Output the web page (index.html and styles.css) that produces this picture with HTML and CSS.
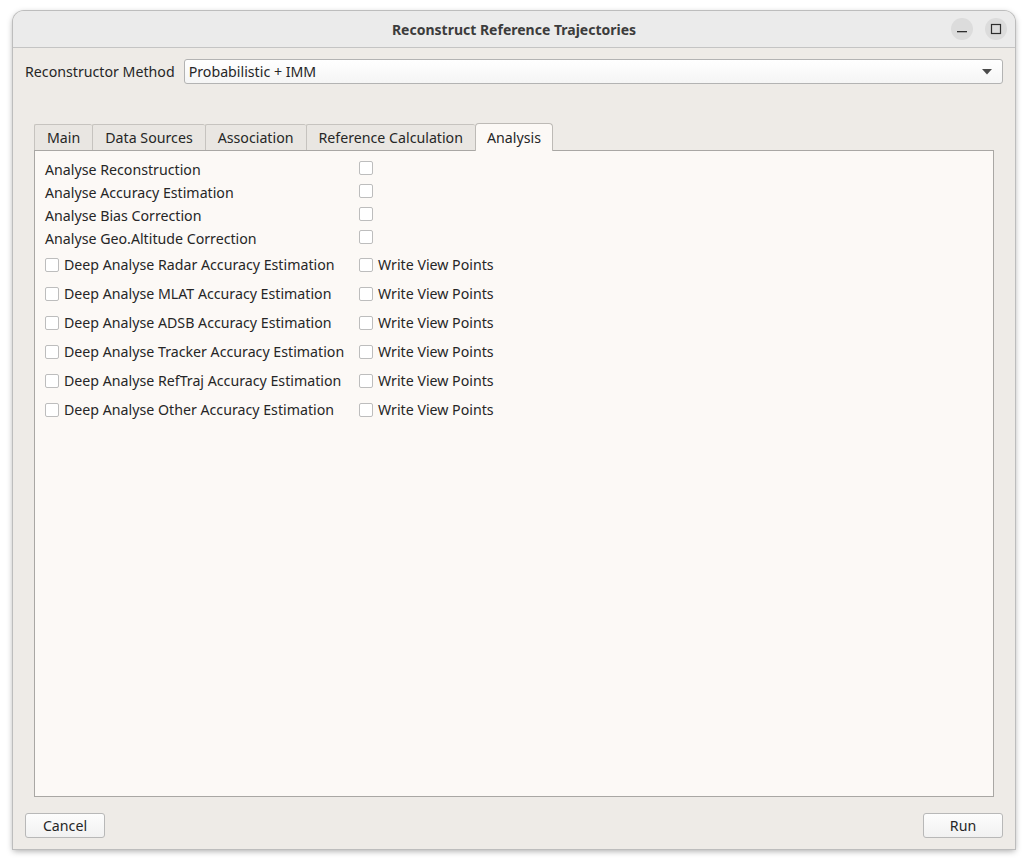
FILE: index.html
```html
<!DOCTYPE html>
<html>
<head>
<meta charset="utf-8">
<link rel="stylesheet" href="styles.css">
</head>
<body>
<div class="window">
  <div class="titlebar">
    <div class="title">Reconstruct Reference Trajectories</div>
    <div class="wbtns">
      <span class="wbtn"><svg width="12" height="12" viewBox="0 0 12 12"><rect x="1" y="8" width="10" height="1.3" fill="#2e2e2e"/></svg></span>
      <span class="wbtn"><svg width="12" height="12" viewBox="0 0 12 12"><rect x="1.5" y="1.5" width="9" height="9" fill="none" stroke="#2e2e2e" stroke-width="1.2"/></svg></span>
    </div>
  </div>
  <div class="content">
    <div class="method-row">
      <span class="label">Reconstructor Method</span>
      <div class="combo"><span>Probabilistic + IMM</span><svg width="10" height="6" viewBox="0 0 10 6"><path d="M0 0 L10 0 L5 5.5 Z" fill="#4a4a4a"/></svg></div>
    </div>
    <div class="tabs">
      <div class="tab">Main</div>
      <div class="tab">Data Sources</div>
      <div class="tab">Association</div>
      <div class="tab">Reference Calculation</div>
      <div class="tab active">Analysis</div>
    </div>
    <div class="panel">
      <div class="simple">
        <div class="srow"><span class="txt">Analyse Reconstruction</span><span class="cb"></span></div>
        <div class="srow"><span class="txt">Analyse Accuracy Estimation</span><span class="cb"></span></div>
        <div class="srow"><span class="txt">Analyse Bias Correction</span><span class="cb"></span></div>
        <div class="srow"><span class="txt">Analyse Geo.Altitude Correction</span><span class="cb"></span></div>
      </div>
      <div class="deep">
        <div class="drow"><label class="chk"><span class="cb"></span>Deep Analyse Radar Accuracy Estimation</label><label class="chk"><span class="cb"></span>Write View Points</label></div>
        <div class="drow"><label class="chk"><span class="cb"></span>Deep Analyse MLAT Accuracy Estimation</label><label class="chk"><span class="cb"></span>Write View Points</label></div>
        <div class="drow"><label class="chk"><span class="cb"></span>Deep Analyse ADSB Accuracy Estimation</label><label class="chk"><span class="cb"></span>Write View Points</label></div>
        <div class="drow"><label class="chk"><span class="cb"></span>Deep Analyse Tracker Accuracy Estimation</label><label class="chk"><span class="cb"></span>Write View Points</label></div>
        <div class="drow"><label class="chk"><span class="cb"></span>Deep Analyse RefTraj Accuracy Estimation</label><label class="chk"><span class="cb"></span>Write View Points</label></div>
        <div class="drow"><label class="chk"><span class="cb"></span>Deep Analyse Other Accuracy Estimation</label><label class="chk"><span class="cb"></span>Write View Points</label></div>
      </div>
    </div>
    <div class="buttons">
      <button class="btn">Cancel</button>
      <button class="btn">Run</button>
    </div>
  </div>
</div>
</body>
</html>
```
FILE: styles.css
```css
* { box-sizing: border-box; }
html, body { margin: 0; padding: 0; background: #ffffff; }
body {
  min-height: 866px;
  font-family: "Noto Sans", "Open Sans", sans-serif;
  font-size: 14.2px;
  color: #262626;
}
.window {
  margin: 11px 0 0 13px;
  width: 1002px;
  height: 838px;
  border-radius: 11px 11px 0 0;
  background: #eeebe7;
  box-shadow: 0 0 0 1px #bdbdbd, 0 2px 6px rgba(0,0,0,0.35);
  overflow: hidden;
  display: flex;
  flex-direction: column;
}
.titlebar {
  height: 37px;
  flex: none;
  background: #ebebeb;
  border-bottom: 1px solid #c4c4c4;
  display: flex;
  align-items: center;
  justify-content: center;
  position: relative;
}
.title {
  font-weight: bold;
  font-size: 14px;
  color: #3c3c3c;
}
.wbtns {
  position: absolute;
  right: 8px;
  top: 7px;
  display: flex;
  gap: 12px;
}
.wbtn {
  width: 22px;
  height: 22px;
  border-radius: 50%;
  background: #dcdcdc;
  display: flex;
  align-items: center;
  justify-content: center;
}
.content {
  flex: 1;
  display: flex;
  flex-direction: column;
  padding: 11px 12px 11px 12px;
}
.method-row {
  display: flex;
  align-items: center;
  gap: 9px;
  height: 25px;
}
.label { white-space: nowrap; }
.combo {
  flex: 1;
  height: 25px;
  border: 1px solid #b3b3b3;
  border-radius: 3px;
  background: linear-gradient(#ffffff, #f5f5f5);
  display: flex;
  align-items: center;
  justify-content: space-between;
  padding: 0 10px 0 4px;
}
.tabs {
  margin-top: 39px;
  margin-left: 9px;
  display: flex;
  align-items: flex-end;
  height: 27px;
  position: relative;
  z-index: 1;
}
.tab {
  height: 26px;
  padding: 0 12px;
  border: 1px solid #c6c3bf;
  border-bottom: none;
  border-right: none;
  background: #e9e6e2;
  display: flex;
  align-items: center;
  color: #262626;
  border-radius: 2px 2px 0 0;
}
.tab.active {
  height: 28px;
  margin-bottom: -1px;
  background: #fcf9f6;
  border-color: #bdbab6;
  border-right: 1px solid #bdbab6;
  border-radius: 4px 4px 0 0;
  padding: 0 11px;
}
.panel {
  margin-left: 9px;
  margin-right: 9px;
  height: 647px;
  background: #fcf9f6;
  border: 1px solid #a9a7a4;
  padding: 7px 10px;
}
.simple {
  display: flex;
  flex-direction: column;
}
.srow {
  display: grid;
  grid-template-columns: 314px 14px;
  height: 23px;
  align-items: center;
}
.cb {
  display: inline-block;
  width: 14px;
  height: 14px;
  border: 1px solid #bdbdbd;
  border-radius: 2px;
  background: #ffffff;
  flex: none;
}
.srow .cb { margin-top: -3px; }
.deep {
  margin-top: 0;
  display: flex;
  flex-direction: column;
}
.drow {
  display: grid;
  grid-template-columns: 314px auto;
  height: 29px;
  align-items: center;
}
.chk {
  display: flex;
  align-items: center;
  gap: 5px;
  white-space: nowrap;
}
.buttons {
  margin-top: auto;
  display: flex;
  justify-content: space-between;
}
.btn {
  width: 80px;
  height: 25px;
  font: inherit;
  color: #262626;
  border: 1px solid #b8b8b8;
  border-radius: 3px;
  background: linear-gradient(#fdfdfd, #f1f1f1);
  padding: 0;
}
```
